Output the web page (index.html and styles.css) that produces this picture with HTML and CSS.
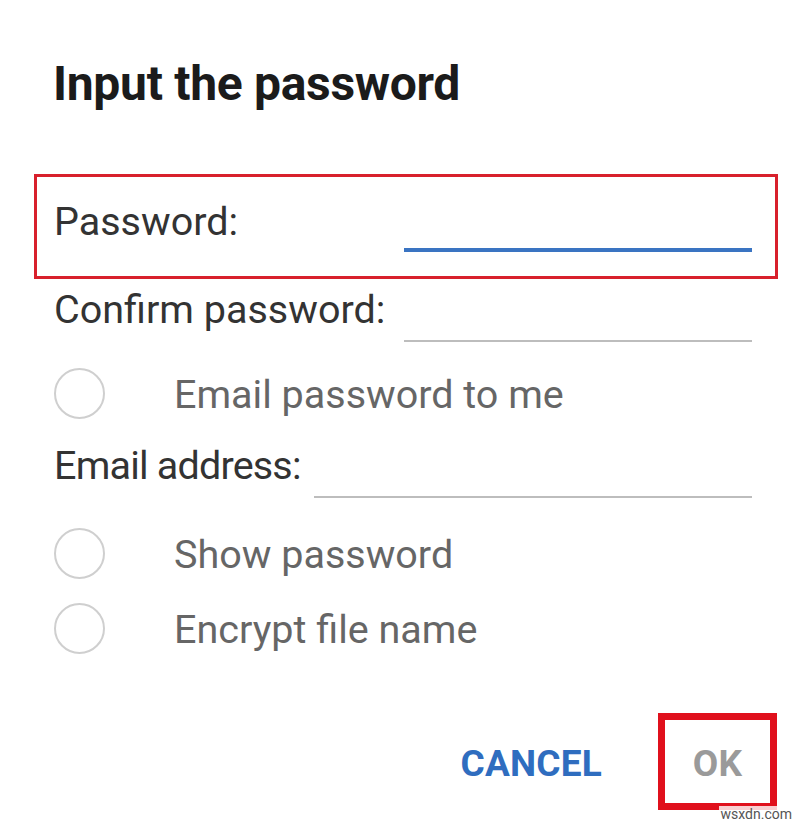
FILE: index.html
```html
<!DOCTYPE html>
<html>
<head>
<meta charset="utf-8">
<link rel="stylesheet" href="styles.css">
</head>
<body>
<div class="dialog">
  <h1 class="title">Input the password</h1>
  <div class="form">
    <div class="row row-password highlight">
      <span class="label">Password:</span>
      <span class="field field-active field-wide"></span>
    </div>
    <div class="row row-confirm">
      <span class="label">Confirm password:</span>
      <span class="field field-wide"></span>
    </div>
    <div class="check check-email">
      <span class="radio"></span>
      <span class="check-text">Email password to me</span>
    </div>
    <div class="row row-email">
      <span class="label label-email">Email address:</span>
      <span class="field field-email"></span>
    </div>
    <div class="check check-show">
      <span class="radio"></span>
      <span class="check-text">Show password</span>
    </div>
    <div class="check check-encrypt">
      <span class="radio"></span>
      <span class="check-text">Encrypt file name</span>
    </div>
  </div>
  <div class="actions">
    <span class="btn btn-cancel">CANCEL</span>
    <span class="btn-ok-wrap"><span class="btn btn-ok">OK</span></span>
  </div>
  <div class="watermark">wsxdn.com</div>
</div>
</body>
</html>
```
FILE: styles.css
```css
* { box-sizing: border-box; }
html, body { margin: 0; padding: 0; background: #fff; }
body { width: 800px; height: 825px; overflow: hidden; font-family: Roboto, "Noto Sans", sans-serif; }
.dialog { position: relative; width: 800px; height: 825px; display: flex; flex-direction: column; }
.title { margin: 0; padding: 56px 0 0 53px; font-size: 48px; font-weight: 700; line-height: 56px; color: #1b1b1b; letter-spacing: -0.3px; }
.form { display: flex; flex-direction: column; padding-top: 62px; }
.row { display: flex; align-items: flex-start; justify-content: space-between; padding: 0 48px 0 54px; }
.label { font-size: 39.5px; color: #333; line-height: 44px; }
.label-email { letter-spacing: -0.8px; }
.field { display: block; height: 2px; background: #bdbdbd; }
.field-wide { width: 348px; }
.field-email { width: 438px; }
.field-active { height: 4px; background: #3a74c2; }
.highlight { margin: 0 22px 0 34px; padding: 0 23px 0 17px; height: 105px; border: 3px solid #d8202c; }
.row-password .label { margin-top: 23px; }
.row-password .field { margin-top: 71px; }
.row-confirm { height: 86px; padding-top: 9px; }
.row-confirm .field { margin-top: 52px; }
.check { display: flex; align-items: center; padding-left: 54px; height: 56px; }
.radio { width: 51px; height: 51px; border: 2px solid #cfcfcf; border-radius: 50%; flex: none; }
.check-text { margin-left: 69px; padding-top: 3px; font-size: 39.5px; color: #666; line-height: 44px; }
.row-email { height: 104px; padding-top: 23px; }
.row-email .field { margin-top: 52px; }
.check-encrypt { margin-top: 19px; }
.actions { display: flex; align-items: center; justify-content: flex-end; padding-right: 23px; margin-top: 57px; }
.btn { font-size: 37px; font-weight: 700; letter-spacing: 0.2px; }
.btn-cancel { color: #2f6dbf; margin-right: 56px; padding-top: 3px; }
.btn-ok-wrap { display: flex; align-items: center; justify-content: center; width: 119px; height: 97px; border: 7px solid #e0101c; }
.btn-ok { color: #9a9a9a; padding-top: 3px; }
.watermark { position: absolute; right: 6px; bottom: 3px; font-size: 14px; color: #555; background: rgba(255,255,255,0.8); padding: 0 2px; }
```
